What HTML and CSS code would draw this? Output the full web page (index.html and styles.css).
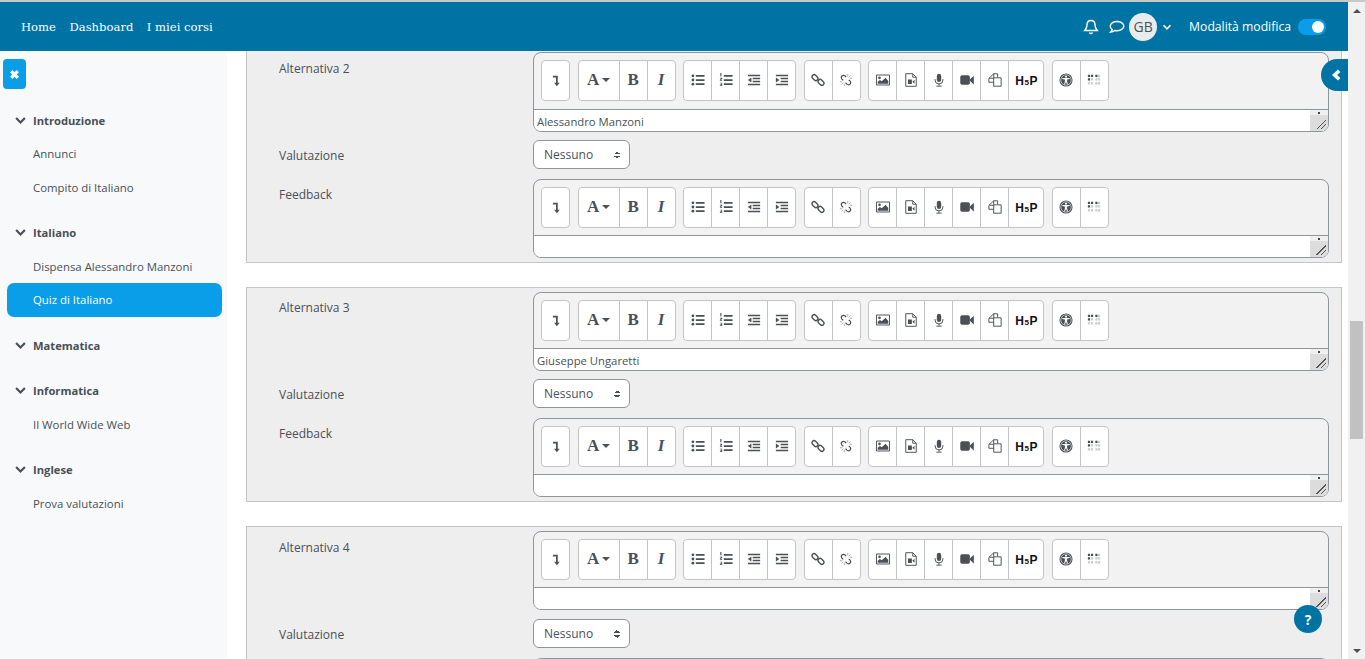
FILE: index.html
```html
<!DOCTYPE html>
<html lang="it">
<head>
<meta charset="utf-8">
<title>Quiz di Italiano</title>
<link rel="stylesheet" href="styles.css">
</head>
<body>
<svg class="defs" width="0" height="0">
  <symbol id="i-down" viewBox="0 0 16 16"><path d="M4.500 3H10v8h2.200L9 15l-3.200-4H8V5H4.500z"/></symbol>
  <symbol id="i-ul" viewBox="0 0 16 16"><circle cx="2.200" cy="3.200" r="1.600"/><circle cx="2.200" cy="8" r="1.600"/><circle cx="2.200" cy="12.800" r="1.600"/><path d="M5.500 2.200H15.500v2H5.500zM5.500 7H15.500v2H5.500zM5.500 11.800H15.500v2H5.500z"/></symbol>
  <symbol id="i-ol" viewBox="0 0 16 16"><path d="M1.500 0h1.300v3.600H1.500zM1 5.500h2.600v1L2.300 8h1.300v.8H1V8l1.400-1.700H1zM1 11h2.600v3.800H1V14h1.700v-.7H1.500v-.7h1.200v-.8H1zM5.500 2.200H15.500v2H5.500zM5.500 7H15.500v2H5.500zM5.500 11.800H15.500v2H5.500z"/></symbol>
  <symbol id="i-out" viewBox="0 0 16 16"><path d="M1 2h14v1.800H1zM6.500 5.400H15v1.800H6.500zM6.500 8.800H15v1.800H6.500zM1 12.200h14V14H1zM5 5.200v5.600L1 8z"/></symbol>
  <symbol id="i-in" viewBox="0 0 16 16"><path d="M1 2h14v1.800H1zM6.500 5.400H15v1.800H6.500zM6.500 8.800H15v1.800H6.500zM1 12.200h14V14H1zM1 5.200v5.600L5 8z"/></symbol>
  <symbol id="i-link" viewBox="0 0 16 16"><g fill="none" stroke="currentColor" stroke-width="1.600"><rect x="0.800" y="3" width="7.500" height="4.600" rx="2.300" transform="rotate(45 4.600 5.300)"/><rect x="7.700" y="8.400" width="7.500" height="4.600" rx="2.300" transform="rotate(45 11.400 10.700)"/></g></symbol>
  <symbol id="i-unlink" viewBox="0 0 16 16"><path fill="none" stroke="currentColor" stroke-width="1.400" d="M8.200 4.600 6.600 3.200a2.500 2.500 0 0 0-3.500 3.500l1.800 1.800M7.500 11.200l1.900 1.800a2.500 2.500 0 0 0 3.500-3.500l-1.700-1.700"/><path fill="none" stroke="currentColor" stroke-width=".9" opacity=".6" d="M10 1v2.800M13 3l-2 2M15 6h-2.800M1 10h2.800M3 13l2-2M6 15v-2.800"/></symbol>
  <symbol id="i-img" viewBox="0 0 16 16"><path fill="none" stroke="currentColor" stroke-width="1.100" d="M.6 2.300h14.800v11.400H.6z"/><circle cx="4" cy="5.500" r="1.500"/><path d="M2 12.200V10l2.500-2 2 1.500L11 5.300l3 3.700v3.200z"/></symbol>
  <symbol id="i-fvid" viewBox="0 0 16 16"><path fill="none" stroke="currentColor" stroke-width="1.100" d="M2 .8h8l4 4V15.200H2zM10 .8v4h4"/><path d="M4.500 7.500h4.500v5H4.500zM9.500 10l2.500-2.200v4.400z"/></symbol>
  <symbol id="i-mic" viewBox="0 0 16 16"><rect x="5.500" y="0.800" width="5" height="9.500" rx="2.500"/><path fill="none" stroke="currentColor" stroke-width="1.100" d="M3.500 7v1a4.500 4.500 0 0 0 9 0V7M8 12.500v2M5 15h6"/></symbol>
  <symbol id="i-vid" viewBox="0 0 16 16"><rect x="0.300" y="2.500" width="11" height="11" rx="2"/><path d="M11.500 7 15.800 3v10L11.500 9z"/></symbol>
  <symbol id="i-copy" viewBox="0 0 16 16"><path fill="none" stroke="currentColor" stroke-width="1.100" d="M6.500 5.500V.9H11V5M6.500.9 1 6.200v4.400h5.500M1.400 6h5.100M6.500 5.500H15v9.600H6.500z"/></symbol>
  <symbol id="i-acc" viewBox="0 0 16 16"><circle cx="8" cy="8" r="7.500"/><circle cx="8" cy="8" r="6" fill="none" stroke="#fff" stroke-width=".7"/><circle cx="8" cy="4.200" r="1.200" fill="#fff"/><path fill="#fff" d="M3.800 5.800h8.400v1L9.300 7.400v2.500l1 3.100h-1L8 10.300 6.700 13h-1l1-3.100V7.400L3.800 6.800z"/></symbol>
  <symbol id="i-brl" viewBox="0 0 16 16"><path d="M1 2h2.500v2.500H1zM4.500 2H7v2.500H4.500zM1 6h2.500v2.500H1zM9.500 2H12v2.500H9.500z"/><path opacity=".3" d="M12.500 2H15v2.500h-2.500zM4.500 6H7v2.500H4.500zM9.500 6H12v2.500H9.500zM12.500 6H15v2.500h-2.500zM1 10.500h2.500V13H1zM4.500 10.500H7V13H4.500zM9.500 10.500H12V13H9.500zM12.500 10.500H15V13h-2.500z"/></symbol>
</svg>

<div class="page">
  <div class="app">
    <header class="navbar">
      <nav class="nav-links">
        <a>Home</a><a>Dashboard</a><a>I miei corsi</a>
      </nav>
      <div class="nav-right">
        <svg class="nav-ic" viewBox="0 0 16 16"><path d="M8 1.500c-2.800 0-4 2.200-4 4.500 0 3-1.300 4.300-2.300 5.500h12.600C13.300 10.300 12 9 12 6c0-2.300-1.200-4.500-4-4.500zM6.500 13.500a1.600 1.600 0 0 0 3 0"/></svg>
        <svg class="nav-ic chat" viewBox="0 0 16 16"><path d="M8 2.500c-3.800 0-6.800 2-6.800 4.700 0 1.400.8 2.500 2 3.300-.2 1-.8 1.900-1.500 2.500 1.500-.1 3-.7 4-1.500.7.100 1.500.2 2.300.2 3.800 0 6.800-2 6.800-4.600S11.800 2.500 8 2.500z"/></svg>
        <span class="avatar">GB</span>
        <svg class="nav-chev" viewBox="0 0 10 10"><path d="M1.500 3.200 5 6.800l3.500-3.600"/></svg>
        <span class="mode">Modalità modifica</span>
        <span class="switch"><i></i></span>
      </div>
    </header>
    <div class="body">
      <aside class="sidebar">
        <button class="close-btn"><svg viewBox="0 0 10 10"><path d="M2 2l6 6M8 2l-6 6"/></svg></button>
        <section class="sec">
          <div class="row head"><svg viewBox="0 0 10 10"><path d="M1 2.800 5 6.800l4-4"/></svg>Introduzione</div>
          <div class="row">Annunci</div>
          <div class="row">Compito di Italiano</div>
        </section>
        <section class="sec">
          <div class="row head"><svg viewBox="0 0 10 10"><path d="M1 2.800 5 6.800l4-4"/></svg>Italiano</div>
          <div class="row">Dispensa Alessandro Manzoni</div>
          <div class="row active">Quiz di Italiano</div>
        </section>
        <section class="sec">
          <div class="row head"><svg viewBox="0 0 10 10"><path d="M1 2.800 5 6.800l4-4"/></svg>Matematica</div>
        </section>
        <section class="sec">
          <div class="row head"><svg viewBox="0 0 10 10"><path d="M1 2.800 5 6.800l4-4"/></svg>Informatica</div>
          <div class="row">Il World Wide Web</div>
        </section>
        <section class="sec">
          <div class="row head"><svg viewBox="0 0 10 10"><path d="M1 2.800 5 6.800l4-4"/></svg>Inglese</div>
          <div class="row">Prova valutazioni</div>
        </section>
      </aside>
      <main class="main">
        <fieldset class="block first">
          <div class="field"><label>Alternativa 2</label>
            <div class="editor">
              <div class="toolbar">
                <div class="grp"><b class="btn"><svg><use href="#i-down"/></svg></b></div>
                <div class="grp"><b class="btn wide"><span class="t-a">A</span><i class="caret"></i></b><b class="btn"><span class="t-b">B</span></b><b class="btn"><span class="t-i">I</span></b></div>
                <div class="grp"><b class="btn"><svg><use href="#i-ul"/></svg></b><b class="btn"><svg><use href="#i-ol"/></svg></b><b class="btn"><svg><use href="#i-out"/></svg></b><b class="btn"><svg><use href="#i-in"/></svg></b></div>
                <div class="grp"><b class="btn"><svg><use href="#i-link"/></svg></b><b class="btn"><svg><use href="#i-unlink"/></svg></b></div>
                <div class="grp"><b class="btn"><svg><use href="#i-img"/></svg></b><b class="btn"><svg><use href="#i-fvid"/></svg></b><b class="btn"><svg><use href="#i-mic"/></svg></b><b class="btn"><svg><use href="#i-vid"/></svg></b><b class="btn"><svg><use href="#i-copy"/></svg></b><b class="btn h5p"><span>H<small>5</small>P</span></b></div>
                <div class="grp"><b class="btn"><svg><use href="#i-acc"/></svg></b><b class="btn"><svg><use href="#i-brl"/></svg></b></div>
              </div>
              <div class="area"><span>Alessandro Manzoni</span><i class="grip"></i></div>
            </div>
          </div>
          <div class="field sel"><label>Valutazione</label><div class="select">Nessuno<i class="updown"></i></div></div>
          <div class="field"><label>Feedback</label>
            <div class="editor">
              <div class="toolbar">
                <div class="grp"><b class="btn"><svg><use href="#i-down"/></svg></b></div>
                <div class="grp"><b class="btn wide"><span class="t-a">A</span><i class="caret"></i></b><b class="btn"><span class="t-b">B</span></b><b class="btn"><span class="t-i">I</span></b></div>
                <div class="grp"><b class="btn"><svg><use href="#i-ul"/></svg></b><b class="btn"><svg><use href="#i-ol"/></svg></b><b class="btn"><svg><use href="#i-out"/></svg></b><b class="btn"><svg><use href="#i-in"/></svg></b></div>
                <div class="grp"><b class="btn"><svg><use href="#i-link"/></svg></b><b class="btn"><svg><use href="#i-unlink"/></svg></b></div>
                <div class="grp"><b class="btn"><svg><use href="#i-img"/></svg></b><b class="btn"><svg><use href="#i-fvid"/></svg></b><b class="btn"><svg><use href="#i-mic"/></svg></b><b class="btn"><svg><use href="#i-vid"/></svg></b><b class="btn"><svg><use href="#i-copy"/></svg></b><b class="btn h5p"><span>H<small>5</small>P</span></b></div>
                <div class="grp"><b class="btn"><svg><use href="#i-acc"/></svg></b><b class="btn"><svg><use href="#i-brl"/></svg></b></div>
              </div>
              <div class="area"><i class="grip"></i></div>
            </div>
          </div>
        </fieldset>
        <fieldset class="block">
          <div class="field"><label>Alternativa 3</label>
            <div class="editor">
              <div class="toolbar">
                <div class="grp"><b class="btn"><svg><use href="#i-down"/></svg></b></div>
                <div class="grp"><b class="btn wide"><span class="t-a">A</span><i class="caret"></i></b><b class="btn"><span class="t-b">B</span></b><b class="btn"><span class="t-i">I</span></b></div>
                <div class="grp"><b class="btn"><svg><use href="#i-ul"/></svg></b><b class="btn"><svg><use href="#i-ol"/></svg></b><b class="btn"><svg><use href="#i-out"/></svg></b><b class="btn"><svg><use href="#i-in"/></svg></b></div>
                <div class="grp"><b class="btn"><svg><use href="#i-link"/></svg></b><b class="btn"><svg><use href="#i-unlink"/></svg></b></div>
                <div class="grp"><b class="btn"><svg><use href="#i-img"/></svg></b><b class="btn"><svg><use href="#i-fvid"/></svg></b><b class="btn"><svg><use href="#i-mic"/></svg></b><b class="btn"><svg><use href="#i-vid"/></svg></b><b class="btn"><svg><use href="#i-copy"/></svg></b><b class="btn h5p"><span>H<small>5</small>P</span></b></div>
                <div class="grp"><b class="btn"><svg><use href="#i-acc"/></svg></b><b class="btn"><svg><use href="#i-brl"/></svg></b></div>
              </div>
              <div class="area"><span>Giuseppe Ungaretti</span><i class="grip"></i></div>
            </div>
          </div>
          <div class="field sel"><label>Valutazione</label><div class="select">Nessuno<i class="updown"></i></div></div>
          <div class="field"><label>Feedback</label>
            <div class="editor">
              <div class="toolbar">
                <div class="grp"><b class="btn"><svg><use href="#i-down"/></svg></b></div>
                <div class="grp"><b class="btn wide"><span class="t-a">A</span><i class="caret"></i></b><b class="btn"><span class="t-b">B</span></b><b class="btn"><span class="t-i">I</span></b></div>
                <div class="grp"><b class="btn"><svg><use href="#i-ul"/></svg></b><b class="btn"><svg><use href="#i-ol"/></svg></b><b class="btn"><svg><use href="#i-out"/></svg></b><b class="btn"><svg><use href="#i-in"/></svg></b></div>
                <div class="grp"><b class="btn"><svg><use href="#i-link"/></svg></b><b class="btn"><svg><use href="#i-unlink"/></svg></b></div>
                <div class="grp"><b class="btn"><svg><use href="#i-img"/></svg></b><b class="btn"><svg><use href="#i-fvid"/></svg></b><b class="btn"><svg><use href="#i-mic"/></svg></b><b class="btn"><svg><use href="#i-vid"/></svg></b><b class="btn"><svg><use href="#i-copy"/></svg></b><b class="btn h5p"><span>H<small>5</small>P</span></b></div>
                <div class="grp"><b class="btn"><svg><use href="#i-acc"/></svg></b><b class="btn"><svg><use href="#i-brl"/></svg></b></div>
              </div>
              <div class="area"><i class="grip"></i></div>
            </div>
          </div>
        </fieldset>
        <fieldset class="block last">
          <div class="field"><label>Alternativa 4</label>
            <div class="editor">
              <div class="toolbar">
                <div class="grp"><b class="btn"><svg><use href="#i-down"/></svg></b></div>
                <div class="grp"><b class="btn wide"><span class="t-a">A</span><i class="caret"></i></b><b class="btn"><span class="t-b">B</span></b><b class="btn"><span class="t-i">I</span></b></div>
                <div class="grp"><b class="btn"><svg><use href="#i-ul"/></svg></b><b class="btn"><svg><use href="#i-ol"/></svg></b><b class="btn"><svg><use href="#i-out"/></svg></b><b class="btn"><svg><use href="#i-in"/></svg></b></div>
                <div class="grp"><b class="btn"><svg><use href="#i-link"/></svg></b><b class="btn"><svg><use href="#i-unlink"/></svg></b></div>
                <div class="grp"><b class="btn"><svg><use href="#i-img"/></svg></b><b class="btn"><svg><use href="#i-fvid"/></svg></b><b class="btn"><svg><use href="#i-mic"/></svg></b><b class="btn"><svg><use href="#i-vid"/></svg></b><b class="btn"><svg><use href="#i-copy"/></svg></b><b class="btn h5p"><span>H<small>5</small>P</span></b></div>
                <div class="grp"><b class="btn"><svg><use href="#i-acc"/></svg></b><b class="btn"><svg><use href="#i-brl"/></svg></b></div>
              </div>
              <div class="area"><i class="grip"></i></div>
            </div>
          </div>
          <div class="field sel"><label>Valutazione</label><div class="select">Nessuno<i class="updown"></i></div></div>
          <div class="field"><label></label><div class="editor"><div class="toolbar"></div></div></div>
        </fieldset>
      </main>
      <button class="drawer-btn"><svg viewBox="0 0 10 10"><path d="M6.800 1.500 3 5l3.800 3.500"/></svg></button>
      <button class="help-btn">?</button>
    </div>
  </div>
  <div class="scrollbar">
    <i class="arrow up"></i>
    <div class="track"><div class="thumb"></div></div>
    <i class="arrow dn"></i>
  </div>
</div>
</body>
</html>
```
FILE: styles.css
```css
* { box-sizing: border-box; }
html, body { margin: 0; height: 100%; overflow: hidden; }
body { font-family: "Open Sans", "Noto Sans", sans-serif; font-size: 12px; color: #495057; background: #fff; }
.defs { position: absolute; }
.page { display: flex; height: 659px; border-top: 2px solid #c8c8c8; }
.app { flex: 1; min-width: 0; display: flex; flex-direction: column; }

.navbar { height: 49px; flex: none; background: #0073a5; color: #fff; display: flex; align-items: center; justify-content: space-between; padding: 0 22px 0 21px; position: relative; z-index: 2; }
.nav-links { display: flex; gap: 13.500px; font-family: "DejaVu Serif", serif; font-size: 11.600px; }
.nav-right { display: flex; align-items: center; }
.nav-ic { width: 16px; height: 16px; fill: none; stroke: #fff; stroke-width: 1.400; margin-right: 10px; }
.nav-ic.chat { margin-right: 4px; }
.avatar { width: 28px; height: 28px; border-radius: 50%; background: #e9ecef; color: #495057; display: flex; align-items: center; justify-content: center; font-size: 14px; }
.nav-chev { width: 10px; height: 10px; fill: none; stroke: #fff; stroke-width: 1.600; margin: 0 17px 0 5px; }
.mode { font-size: 12.200px; color: #fff; margin-right: 7px; }
.switch { width: 28px; height: 16px; border-radius: 8px; background: #0a9de8; display: flex; align-items: center; justify-content: flex-end; padding-right: 2px; }
.switch i { width: 12px; height: 12px; border-radius: 50%; background: #fff; }

.body { flex: 1; min-height: 0; display: flex; position: relative; overflow: hidden; }
.sidebar { width: 227px; flex: none; background: #f8f9fb; padding: 8px 5px 0 7px; color: #495057; font-size: 11.400px; }
.close-btn { display: flex; align-items: center; justify-content: center; width: 23px; height: 30px; margin: 0 0 14.600px -4px; padding: 0; border: 0; border-radius: 4px; background: #0a9de8; }
.close-btn svg { width: 11px; height: 11px; fill: none; stroke: #fff; stroke-width: 3; }
.sec { margin-bottom: 12px; }
.row { height: 33.500px; display: flex; align-items: center; padding-left: 26px; border-radius: 7px; }
.row.head { font-weight: 700; font-size: 11.200px; padding-left: 8px; }
.row.head svg { width: 11px; height: 11px; fill: none; stroke: #495057; stroke-width: 2; margin-right: 7px; }
.row.active { background: #0a9de8; color: #fff; }

.main { flex: 1; min-width: 0; padding: 0 6px 0 19px; margin-top: -3px; }
.block { margin: 0 0 24px; padding: 4px 0 4px 32px; border: 1px solid #c4c4c4; background: #eeeeee; min-width: 0; }
.block.first { border-top: 0; padding-top: 5px; }
.first .field:first-child .editor { height: 80px; margin-top: -1px; }
.first .field:first-child .toolbar { height: 56px; }
.field { display: flex; align-items: flex-start; margin-bottom: 10px; }
.field:last-child { margin-bottom: 0; }
.field.sel { margin-top: -2px; align-items: center; }
.last .field.sel { margin-top: -1px; }
.last .field:first-child label { padding-top: 8px; }
.field label { width: 254px; flex: none; padding-top: 7px; }
.field.sel label { padding-top: 2px; }
.editor { width: 796px; height: 79px; flex: none; border: 1px solid #8f959e; border-radius: 8px; background: #f2f2f2; display: flex; flex-direction: column; overflow: hidden; }
.toolbar { height: 55px; flex: none; padding: 7px 0 0 7px; display: flex; gap: 7.600px; }
.grp { display: flex; height: 41px; background: #fff; border: 1px solid #c4c4c4; border-radius: 4px; }
.btn { width: 28px; height: 39px; padding-bottom: 2px; display: flex; align-items: center; justify-content: center; border-left: 1px solid #c4c4c4; color: #4b5056; font-weight: 400; }
.btn:first-child { width: 27px; border-left: 0; }
.btn svg { width: 14px; height: 14px; fill: currentColor; }
.btn.wide { width: 40px; }
.btn.h5p { width: 35px; }
.h5p span { font: 700 12px "Liberation Sans", sans-serif; color: #111; padding-top: 2px; }
.h5p small { font-size: 8px; margin: 0 .5px; }
.t-a, .t-b { font: 700 17px "Liberation Serif", serif; }
.t-i { font: italic 700 17px "Liberation Serif", serif; }
.caret { width: 0; height: 0; margin-left: 3px; border: 4px solid transparent; border-top-color: #4b5056; border-bottom: 0; }
.area { flex: 1; position: relative; background: #fff; border-top: 1px solid #8f959e; padding: 3px 0 0 3px; font-size: 11.300px; line-height: 18px; white-space: nowrap; }
.grip { position: absolute; right: 0; top: 0; bottom: 0; width: 18px; background: linear-gradient(#f0f0f0 5px, #dcdcdc 5px); }
.grip::before { content: ""; position: absolute; left: 8px; top: 2px; width: 2px; height: 2px; background: #444; }
.grip::after { content: ""; position: absolute; right: 2px; bottom: 2px; width: 10px; height: 10px; background: linear-gradient(135deg, transparent 50%, #555 50%, #555 56%, transparent 56%, transparent 72%, #555 72%, #555 78%, transparent 78%); }
.select { width: 97px; height: 29px; flex: none; position: relative; display: flex; align-items: center; padding-left: 10px; background: #fff; border: 1px solid #8f959e; border-radius: 6px; }
.updown { position: absolute; right: 9px; top: 10px; width: 6px; height: 8px; background: linear-gradient(135deg, transparent 50%, #495057 50%) 0 0/3px 3px no-repeat, linear-gradient(225deg, transparent 50%, #495057 50%) 3px 0/3px 3px no-repeat, linear-gradient(45deg, transparent 50%, #495057 50%) 0 5px/3px 3px no-repeat, linear-gradient(315deg, transparent 50%, #495057 50%) 3px 5px/3px 3px no-repeat; }

.drawer-btn { position: absolute; right: 0; top: 8px; width: 27px; height: 32px; padding: 0 0 0 4px; border: 0; border-radius: 16px 0 0 16px; background: #0073a5; display: flex; align-items: center; justify-content: center; }
.drawer-btn svg { width: 12px; height: 12px; fill: none; stroke: #fff; stroke-width: 3; }
.help-btn { position: absolute; right: 26px; bottom: 26px; width: 28px; height: 28px; padding: 0; border: 0; border-radius: 50%; background: #0073a5; color: #fff; font: 700 14px "Open Sans", sans-serif; }

.scrollbar { width: 17px; flex: none; background: #f1f1f1; display: flex; flex-direction: column; align-items: center; }
.track { flex: 1; width: 100%; padding: 0 2px; }
.thumb { height: 118px; margin-top: 302px; background: #c1c1c1; }
.arrow { flex: none; height: 17px; width: 100%; display: flex; align-items: center; justify-content: center; }
.arrow::before { content: ""; border: 4px solid transparent; border-top: 0; border-bottom: 4px solid #505050; }
.arrow.dn::before { border: 4px solid transparent; border-bottom: 0; border-top: 4px solid #505050; }
```
